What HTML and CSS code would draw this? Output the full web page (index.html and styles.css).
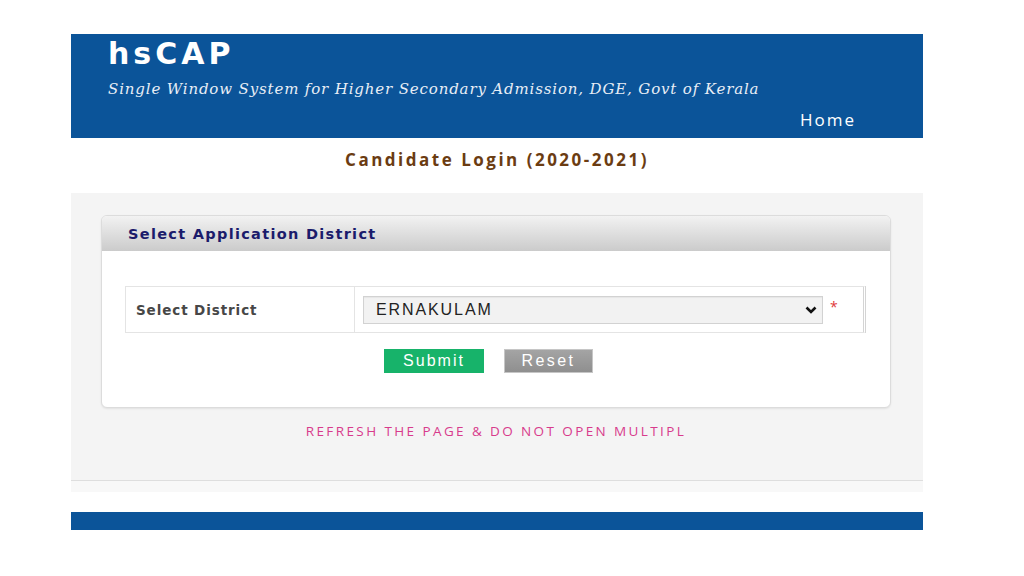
FILE: index.html
```html
<!doctype html>
<html lang="en">

<head>
    <meta charset="UTF-8">
    <title>hsCAP - Candidate Login</title>
    <link rel="stylesheet" href="styles.css">
</head>

<body>
    <div class="page">
        <div class="header">
            <div class="logo">hsCAP</div>
            <div class="tagline">Single Window System for Higher Secondary Admission, DGE, Govt of Kerala</div>
            <div class="nav"><a href="#">Home</a></div>
        </div>

        <h1 class="page-title">Candidate Login (2020-2021)</h1>

        <div class="content">
            <div class="panel">
                <div class="panel-head">Select Application District</div>
                <div class="panel-body">
                    <div class="form-row">
                        <label class="form-label" for="district">Select District</label>
                        <div class="form-field">
                            <div class="select-box">
                                <select id="district">
                                    <option>ERNAKULAM</option>
                                </select>
                                <svg class="chevron" width="12" height="8" viewBox="0 0 12 8">
                                    <path d="M1.5 1.5 L6 6 L10.5 1.5" fill="none" stroke="#111" stroke-width="2.6" />
                                </svg>
                            </div>
                            <span class="required">*</span>
                        </div>
                    </div>
                    <div class="buttons">
                        <button class="btn btn-submit">Submit</button>
                        <button class="btn btn-reset">Reset</button>
                    </div>
                </div>
            </div>
            <p class="notice">REFRESH THE PAGE &amp; DO NOT OPEN MULTIPL</p>
        </div>
        <div class="content-foot"></div>

        <div class="footer"></div>
    </div>
</body>

</html>
```

FILE: styles.css
```css
body {
    margin: 0;
    background: #fff;
    font-family: "Open Sans", "DejaVu Sans", sans-serif;
}

.page {
    width: 852px;
    margin: 34px 0 0 71px;
}

.header {
    background: #0b5499;
    height: 104px;
    box-sizing: border-box;
    padding: 2px 0 0 37px;
    color: #fff;
    display: flex;
    flex-direction: column;
}

.logo {
    font-family: "DejaVu Sans", Verdana, sans-serif;
    font-size: 30px;
    font-weight: bold;
    line-height: 36px;
    letter-spacing: 4px;
}

.tagline {
    font-family: "DejaVu Serif", serif;
    font-style: italic;
    font-size: 15px;
    margin-top: 8px;
    color: #e8eef6;
    letter-spacing: 0.85px;
}

.nav {
    text-align: right;
    padding-right: 67px;
    margin-top: 10px;
}

.nav a {
    color: #fff;
    text-decoration: none;
    font-size: 17px;
    letter-spacing: 2px;
}

.page-title {
    margin: 0;
    padding: 10px 0 0;
    height: 55px;
    box-sizing: border-box;
    text-align: center;
    font-size: 17px;
    font-weight: 700;
    color: #6b3c12;
    letter-spacing: 2.5px;
}

.content {
    background: #f4f4f4;
    padding: 22px 32px 1px 30px;
    height: 288px;
    box-sizing: border-box;
    border-bottom: 1px solid #dedede;
}

.content-foot {
    height: 11px;
    background: #f8f8f8;
}

.panel {
    background: #fff;
    border: 1px solid #dcdcdc;
    border-radius: 6px;
    height: 193px;
    box-sizing: border-box;
    box-shadow: 0 1px 2px rgba(0, 0, 0, 0.08);
    overflow: hidden;
}

.panel-head {
    height: 35px;
    line-height: 36px;
    padding-left: 26px;
    background: linear-gradient(#f2f2f2, #cbcbcb);
    font-family: "DejaVu Sans", Verdana, sans-serif;
    font-weight: bold;
    font-size: 14.5px;
    letter-spacing: 1.3px;
    color: #1b1b6b;
}

.panel-body {
    padding: 35px 24px 0 23px;
}

.form-row {
    display: flex;
    height: 45px;
    border: 1px solid #e4e4e4;
    border-right: 3px double #d4d4d4;
}

.form-label {
    width: 218px;
    padding-left: 10px;
    border-right: 1px solid #e4e4e4;
    display: flex;
    align-items: center;
    font-family: "DejaVu Sans", Verdana, sans-serif;
    font-weight: bold;
    font-size: 13.5px;
    letter-spacing: 0.9px;
    color: #474747;
}

.form-field {
    flex: 1;
    display: flex;
    align-items: center;
    padding-left: 8px;
}

.select-box {
    position: relative;
    width: 460px;
    height: 28px;
}

.select-box select {
    width: 100%;
    height: 100%;
    appearance: none;
    border: 1px solid #d2d2d2;
    background: #f2f2f2;
    padding: 0 0 0 12px;
    font-family: "Liberation Sans", Arial, sans-serif;
    font-size: 16px;
    letter-spacing: 1.9px;
    color: #222;
    box-shadow: inset 0 1px 1px rgba(0, 0, 0, 0.05);
}

.chevron {
    position: absolute;
    right: 6px;
    top: 10px;
}

.required {
    color: #e03a3a;
    font-size: 14px;
    margin-left: 7px;
    margin-top: -6px;
}

.buttons {
    display: flex;
    justify-content: center;
    gap: 20px;
    margin-top: 16px;
    padding-right: 14px;
}

.btn {
    border: 0;
    height: 24px;
    padding: 0;
    color: #fff;
    font-family: "Liberation Sans", Arial, sans-serif;
    font-size: 16px;
    letter-spacing: 2px;
}

.btn-submit {
    width: 100px;
    background: #17b36a;
}

.btn-reset {
    width: 89px;
    background: linear-gradient(#a4a4a4, #8f8f8f);
    border: 1px solid #c6c6c6;
    letter-spacing: 2.4px;
}

.notice {
    margin: 14px 0 0;
    text-align: center;
    font-size: 13.5px;
    color: #d83b8c;
    letter-spacing: 2.4px;
}

.footer {
    margin-top: 20px;
    height: 18px;
    background: #0b5499;
}
```
